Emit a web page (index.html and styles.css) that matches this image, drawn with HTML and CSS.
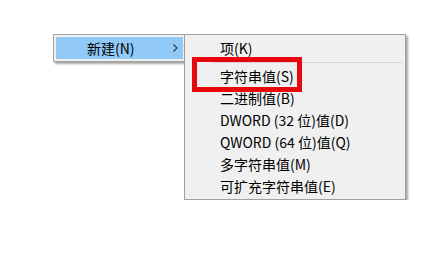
FILE: index.html
```html
<!DOCTYPE html>
<html>

<head>
    <meta charset="UTF-8">
    <title>新建</title>
    <link rel="stylesheet" href="styles.css">
</head>

<body>
    <div class="menus">
        <div class="menu main-menu">
            <div class="menu-item active">
                <span class="label">新建(N)</span>
                <svg class="arrow" width="5" height="8" viewBox="0 0 5 8">
                    <path d="M0.5 0.5 L4 4 L0.5 7.5" fill="none" stroke="#333" stroke-width="1.1"/>
                </svg>
            </div>
        </div>
        <div class="menu sub-menu">
            <div class="menu-item">项(K)</div>
            <div class="separator"></div>
            <div class="menu-item">字符串值(S)</div>
            <div class="menu-item">二进制值(B)</div>
            <div class="menu-item">DWORD (32 位)值(D)</div>
            <div class="menu-item">QWORD (64 位)值(Q)</div>
            <div class="menu-item">多字符串值(M)</div>
            <div class="menu-item">可扩充字符串值(E)</div>
            <div class="highlight-box"></div>
        </div>
    </div>
</body>

</html>
```

FILE: styles.css
```css
body {
    margin: 0;
    padding: 34px 0 0 53px;
    background: #fff;
    font-family: "Noto Sans CJK SC", "Microsoft YaHei", sans-serif;
    font-size: 14px;
    color: #000;
}

.menus {
    display: flex;
    align-items: flex-start;
}

.menu {
    background: #f0f0f0;
    border: 1px solid #a0a0a0;
    box-shadow: 2px 2px 2px rgba(0, 0, 0, 0.35);
    padding: 2px;
}

.main-menu {
    width: 127px;
}

.main-menu .menu-item {
    display: flex;
    align-items: center;
    justify-content: space-between;
    padding: 0 5px 0 31px;
}

.menu-item {
    height: 22px;
    line-height: 22px;
    white-space: nowrap;
}

.menu-item.active {
    background: #91c9f7;
}

.arrow {
    display: block;
}

.sub-menu {
    position: relative;
    width: 216px;
    margin-left: -2px;
}

.sub-menu .menu-item {
    padding-left: 33px;
}

.separator {
    height: 1px;
    background: #d7d7d7;
    margin: 3px 0 2px 27px;
}

.highlight-box {
    position: absolute;
    left: 7px;
    top: 22px;
    width: 100px;
    height: 25px;
    border: 5px solid #e8070c;
}
```
